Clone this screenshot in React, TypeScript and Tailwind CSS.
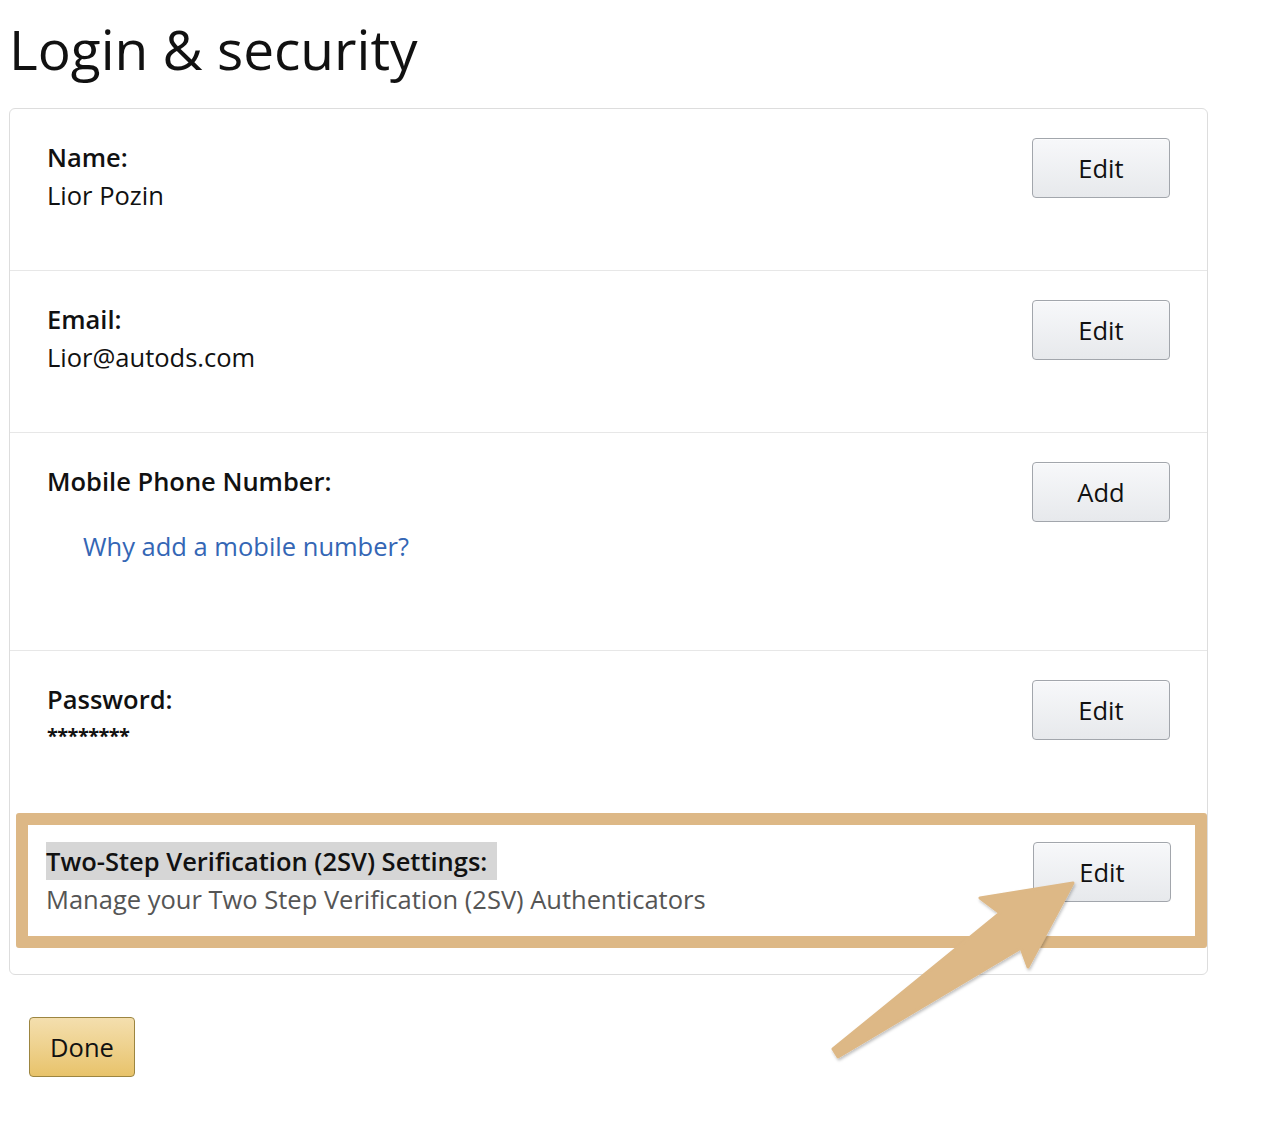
import React from "react";

const font = { fontFamily: "'Open Sans', Lato, sans-serif" };

const EditButton = ({ label = "Edit" }: { label?: string }) => (
  <button className="h-[60px] w-[138px] shrink-0 rounded-[4px] border border-[#a2a6ac] bg-gradient-to-b from-[#f7f8fa] to-[#e7e9ec] text-[25.5px] text-[#111] shadow-[0_1px_0_rgba(255,255,255,0.6)_inset]">
    {label}
  </button>
);

const rows = [
  { label: "Name:", value: "Lior Pozin", button: "Edit" },
  { label: "Email:", value: "Lior@autods.com", button: "Edit" },
];

const App = () => {
  return (
    <div className="relative min-h-[1126px] bg-white pl-[9px] pt-[12px] text-[#111]" style={font}>
      <h1 className="text-[55px] leading-[74px] font-normal">Login &amp; security</h1>

      <div className="mt-[22px] w-[1199px] rounded-[6px] border border-[#dddddd]">
        {rows.map((r) => (
          <div key={r.label} className="flex h-[162px] justify-between border-b border-[#e7e7e7] pl-[37px] pr-[37px] pt-[29px]">
            <div className="text-[25.5px] leading-[38px]">
              <div className="font-semibold">{r.label}</div>
              <div>{r.value}</div>
            </div>
            <EditButton label={r.button} />
          </div>
        ))}

        <div className="flex h-[218px] justify-between border-b border-[#e7e7e7] pl-[37px] pr-[37px] pt-[29px]">
          <div className="text-[25.5px] leading-[38px]">
            <div className="font-semibold">Mobile Phone Number:</div>
            <a className="ml-[36px] mt-[27px] block text-[#3466b5]" href="#">
              Why add a mobile number?
            </a>
          </div>
          <EditButton label="Add" />
        </div>

        <div className="flex h-[162px] justify-between pl-[37px] pr-[37px] pt-[29px]">
          <div className="text-[25.5px] leading-[38px]">
            <div className="font-semibold">Password:</div>
            <div className="mt-[5px] text-[20px] leading-[26px] font-bold tracking-[-0.6px]">********</div>
          </div>
          <EditButton />
        </div>

        <div className="h-[161px] pl-[6px]">
          <div className="flex h-[135px] justify-between rounded-[3px] border-[12px] border-[#ddb886] pl-[18px] pr-[24px] pt-[17px]">
            <div className="text-[25.5px] leading-[38px]">
              <div className="inline-block bg-[#d6d6d6] pr-[10px] font-semibold">
                Two-Step Verification (2SV) Settings:
              </div>
              <div className="text-[#555]">Manage your Two Step Verification (2SV) Authenticators</div>
            </div>
            <EditButton />
          </div>
        </div>
      </div>

      <button className="ml-[20px] mt-[42px] h-[60px] w-[106px] rounded-[4px] border border-[#9c8540] bg-gradient-to-b from-[#f4dfae] to-[#e8c36a] text-[25.5px] text-[#111]">
        Done
      </button>

      {/* annotation arrow */}
      <svg className="pointer-events-none absolute left-0 top-0" width="1282" height="1126">
        <defs>
          <filter id="sh" x="-10%" y="-10%" width="130%" height="130%">
            <feDropShadow dx="1" dy="2" stdDeviation="1.5" floodColor="#000" floodOpacity="0.25" />
          </filter>
        </defs>
        <polygon
          points="833,1049 1000,913 980,898 1073,883 1028,967 1021,948 838,1057"
          fill="#ddb886"
          stroke="#ddb886"
          strokeWidth="3"
          strokeLinejoin="round"
          filter="url(#sh)"
        />
      </svg>
    </div>
  );
};

export default App;
